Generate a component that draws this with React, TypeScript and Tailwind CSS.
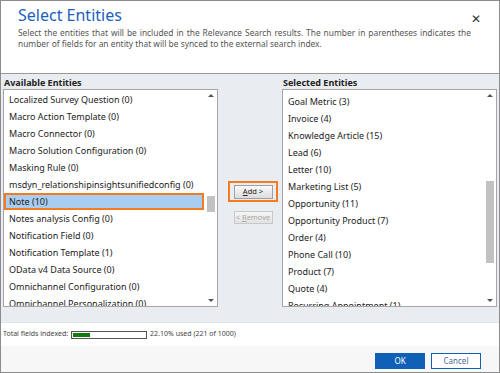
import React from "react";

const left = [
  "Localized Survey Question (0)",
  "Macro Action Template (0)",
  "Macro Connector (0)",
  "Macro Solution Configuration (0)",
  "Masking Rule (0)",
  "msdyn_relationshipinsightsunifiedconfig (0)",
  "Note (10)",
  "Notes analysis Config (0)",
  "Notification Field (0)",
  "Notification Template (1)",
  "OData v4 Data Source (0)",
  "Omnichannel Configuration (0)",
  "Omnichannel Personalization (0)",
];

const right = [
  "Goal Metric (3)",
  "Invoice (4)",
  "Knowledge Article (15)",
  "Lead (6)",
  "Letter (10)",
  "Marketing List (5)",
  "Opportunity (11)",
  "Opportunity Product (7)",
  "Order (4)",
  "Phone Call (10)",
  "Product (7)",
  "Quote (4)",
  "Recurring Appointment (1)",
];

function Scrollbar({ top, height }: { top: number; height: number }) {
  return (
    <div className="relative w-[13px] h-full bg-white shrink-0">
      <div className="absolute top-[4px] left-[4px] w-0 h-0 border-l-[3px] border-r-[3px] border-b-[3px] border-l-transparent border-r-transparent border-b-[#555]" />
      <div
        className="absolute left-[3px] w-[8px] bg-[#c2c2c2]"
        style={{ top, height }}
      />
      <div className="absolute bottom-[4px] left-[4px] w-0 h-0 border-l-[3px] border-r-[3px] border-t-[3px] border-l-transparent border-r-transparent border-t-[#555]" />
    </div>
  );
}

function ListBox({
  items,
  selected,
  thumbTop,
  thumbH,
  pt,
}: {
  items: string[];
  selected?: number;
  thumbTop: number;
  thumbH: number;
  pt: string;
}) {
  return (
    <div className="flex h-[218px] border border-[#a6a6a6] bg-white overflow-hidden">
      <div className={`flex-1 flex flex-col overflow-hidden ${pt}`}>
        {items.map((t, i) => (
          <div
            key={t}
            className={
              i === selected
                ? "h-[17px] shrink-0 flex items-center pl-[3px] bg-[#a9cdf0] border-2 border-[#f47b20] text-[#222]"
                : "h-[17px] shrink-0 flex items-center pl-[5px] text-[#222]"
            }
          >
            {t}
          </div>
        ))}
      </div>
      <Scrollbar top={thumbTop} height={thumbH} />
    </div>
  );
}

export default function App() {
  return (
    <div
      className="w-[500px] h-[373px] border border-[#8c8c8c] flex flex-col overflow-hidden bg-white text-[9px]"
      style={{ fontFamily: '"Noto Sans", "Open Sans", sans-serif' }}
    >
      <div className="relative h-[73px] shrink-0 bg-white px-[17px] pt-[3px] border-b border-[#9a9a9a]">
        <div className="text-[16px] leading-[22px] text-[#1b5fbd]">Select Entities</div>
        <div className="text-[8.4px] leading-[11px] text-[#555] text-justify [text-align-last:left] pr-[11px] mt-[1px]">
          Select the entities that will be included in the Relevance Search results. The number in parentheses indicates the number of fields for an entity that will be synced to the external search index.
        </div>
        <div className="absolute top-[9px] right-[18px] text-[12px] text-[#333]">✕</div>
      </div>

      <div className="h-[248px] shrink-0 bg-[#e9ecf0] flex px-[2px] pt-[3px]">
        <div className="w-[215px] flex flex-col">
          <div className="h-[12px] leading-[12px] font-bold text-[#222] pl-[1px]">Available Entities</div>
          <ListBox items={left} selected={6} thumbTop={106} thumbH={16} pt="pt-[1px]" />
        </div>
        <div className="w-[64px] flex flex-col items-center pt-[104px]">
          <div className="ml-[6px] w-[50px] h-[21px] border-2 border-[#f47b20] flex items-center justify-center">
            <div className="w-[39px] h-[14px] border border-[#a0a0a0] bg-gradient-to-b from-[#fafafa] to-[#dcdcdc] text-[7.5px] text-[#222] flex items-center justify-center">
              <span><span className="underline">A</span>dd &gt;</span>
            </div>
          </div>
          <div className="ml-[6px] mt-[9px] w-[39px] h-[13px] border border-[#c8c8c8] bg-gradient-to-b from-[#f6f6f6] to-[#e2e2e2] text-[7.5px] text-[#aaa] flex items-center justify-center">
            <span>&lt; <span className="underline">R</span>emove</span>
          </div>
        </div>
        <div className="w-[215px] flex flex-col">
          <div className="h-[12px] leading-[12px] font-bold text-[#222] pl-[1px]">Selected Entities</div>
          <ListBox items={right} thumbTop={91} thumbH={82} pt="pt-[3px]" />
        </div>
      </div>

      <div className="h-[24px] shrink-0 bg-white flex items-center pl-[2px] text-[7px] text-[#444] gap-[3px] border-t border-[#e0e3e8]">
        <span>Total fields indexed:</span>
        <div className="w-[76px] h-[8px] border border-[#555] p-[1px] flex">
          <div className="w-[17px] h-full bg-[#107c10]" />
        </div>
        <span>22.10% used (221 of 1000)</span>
      </div>

      <div className="flex-1 bg-[#f7f7f7] flex justify-end items-start pt-[7px] pr-[18px] gap-[6px]">
        <div className="w-[50px] h-[16px] bg-[#1160b7] text-white text-[8px] flex items-center justify-center">OK</div>
        <div className="w-[50px] h-[16px] bg-white border border-[#1160b7] text-[#4a6a9a] text-[8px] flex items-center justify-center">Cancel</div>
      </div>
    </div>
  );
}
